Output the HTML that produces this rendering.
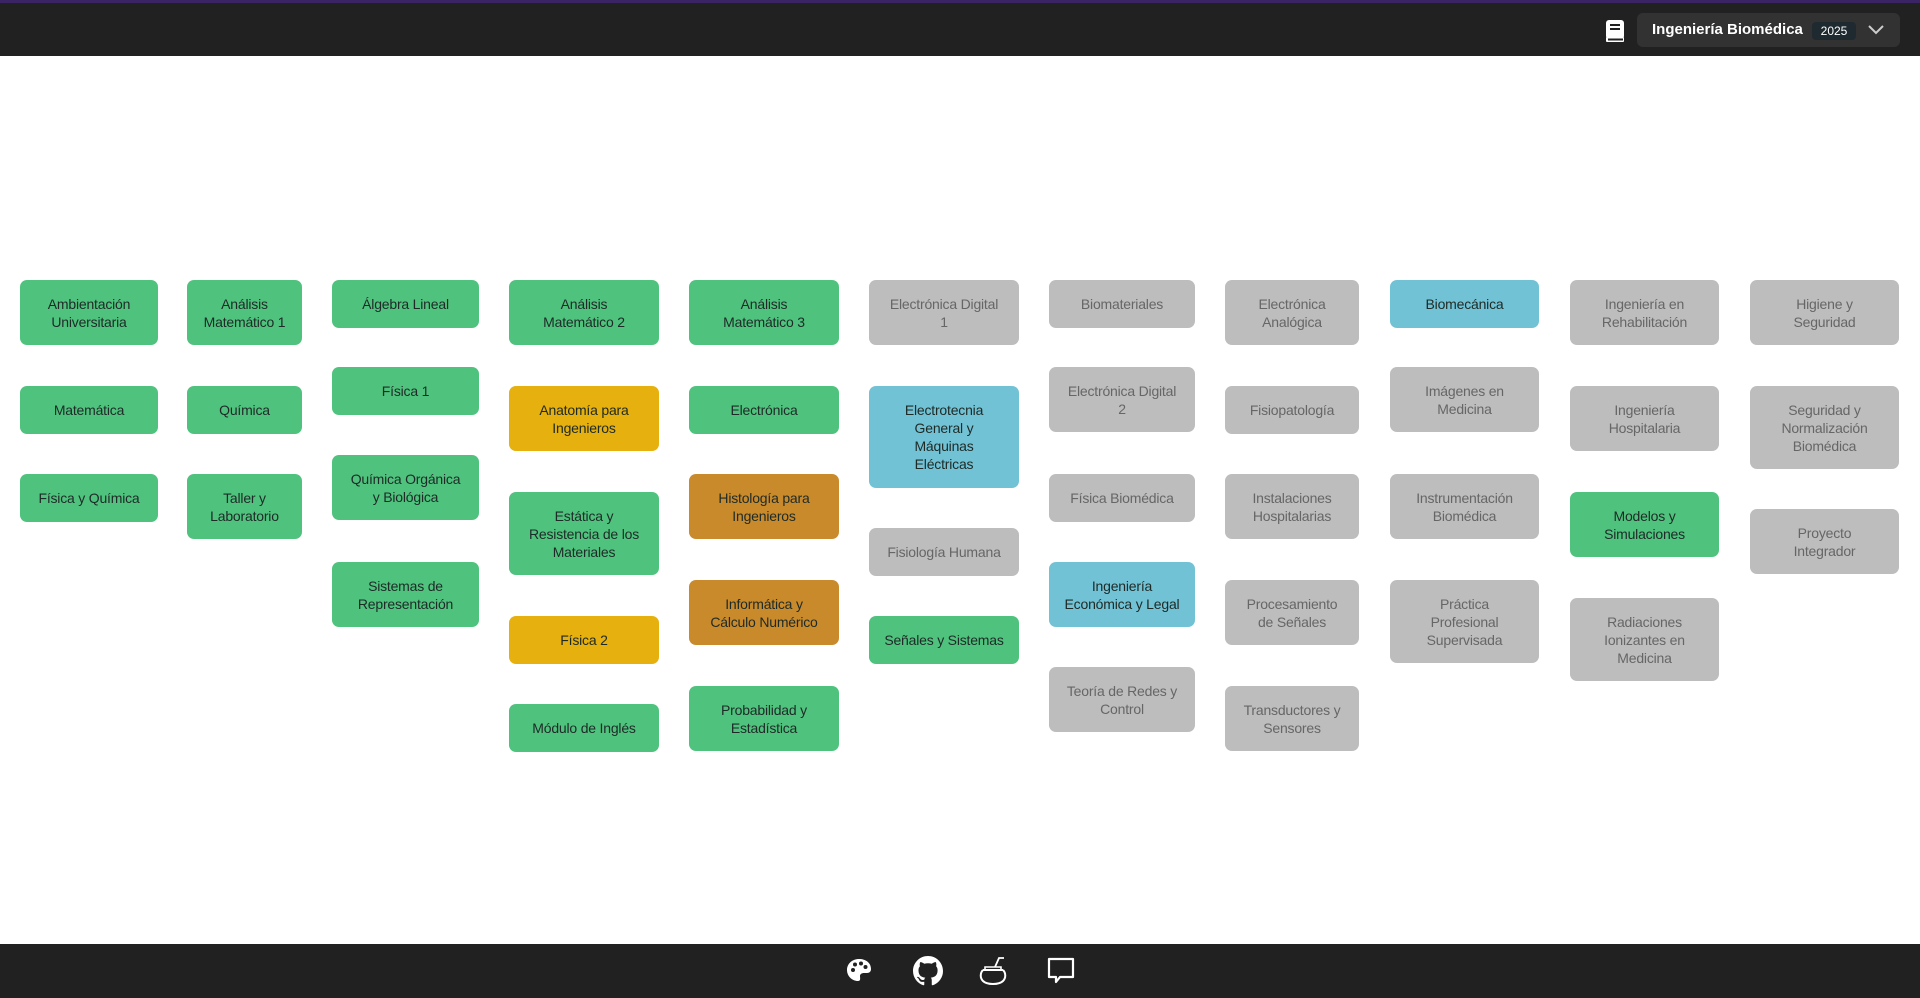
<!DOCTYPE html>
<html><head><meta charset="utf-8"><style>
*{margin:0;padding:0;box-sizing:border-box}
body{width:1920px;height:998px;background:#fff;position:relative;overflow:hidden;font-family:"Liberation Sans",sans-serif}
.hdr{position:absolute;left:0;top:0;width:1920px;height:56px;background:#212121;border-top:3px solid #3b2466}
.ftr{position:absolute;left:0;top:944px;width:1920px;height:54px;background:#212121}
.c{position:absolute;border-radius:7px;display:flex;align-items:center;justify-content:center;text-align:center;font-size:14px;line-height:18px;color:#1e2a26;white-space:nowrap;letter-spacing:-0.2px}
.g{background:#4fc37e}.y{background:#e6b00e}.b{background:#c98a2c}.l{background:#72c2d6}.x{background:#bdbdbd;color:#666}
.sel{position:absolute;left:1637px;top:13px;width:263px;height:34px;background:#323232;border-radius:6px}
</style></head><body>
<div class="hdr"></div>
<svg style="position:absolute;left:1604px;top:19px" width="22" height="24" viewBox="0 0 22 24"><rect x="2" y="1" width="18" height="19" rx="3" fill="#fff"/><rect x="2" y="18" width="18" height="5" rx="1" fill="#fff"/><rect x="4" y="19.5" width="15" height="2" fill="#212121"/><rect x="6" y="5" width="10" height="2" fill="#212121"/><rect x="6" y="9" width="10" height="2" fill="#212121"/></svg>
<div class="sel"></div>
<div style="position:absolute;left:1652px;top:21px;color:#fff;font-weight:bold;font-size:15px">Ingeniería Biomédica</div>
<div style="position:absolute;left:1812px;top:22px;width:44px;height:18px;background:#1e2a30;border-radius:4px;color:#fff;font-size:12px;text-align:center;line-height:18px">2025</div>
<svg style="position:absolute;left:1867px;top:24px" width="18" height="12" viewBox="0 0 18 12"><path d="M2 2l7 7 7-7" stroke="#ccc" stroke-width="2" fill="none"/></svg>

<div class="c g" style="left:20px;top:280px;width:138px;height:65px">Ambientación<br>Universitaria</div>
<div class="c g" style="left:20px;top:386px;width:138px;height:48px">Matemática</div>
<div class="c g" style="left:20px;top:474px;width:138px;height:48px">Física y Química</div>

<div class="c g" style="left:187px;top:280px;width:115px;height:65px">Análisis<br>Matemático 1</div>
<div class="c g" style="left:187px;top:386px;width:115px;height:48px">Química</div>
<div class="c g" style="left:187px;top:474px;width:115px;height:65px">Taller y<br>Laboratorio</div>

<div class="c g" style="left:332px;top:280px;width:147px;height:48px">Álgebra Lineal</div>
<div class="c g" style="left:332px;top:367px;width:147px;height:48px">Física 1</div>
<div class="c g" style="left:332px;top:455px;width:147px;height:65px">Química Orgánica<br>y Biológica</div>
<div class="c g" style="left:332px;top:562px;width:147px;height:65px">Sistemas de<br>Representación</div>

<div class="c g" style="left:509px;top:280px;width:150px;height:65px">Análisis<br>Matemático 2</div>
<div class="c y" style="left:509px;top:386px;width:150px;height:65px">Anatomía para<br>Ingenieros</div>
<div class="c g" style="left:509px;top:492px;width:150px;height:83px">Estática y<br>Resistencia de los<br>Materiales</div>
<div class="c y" style="left:509px;top:616px;width:150px;height:48px">Física 2</div>
<div class="c g" style="left:509px;top:704px;width:150px;height:48px">Módulo de Inglés</div>

<div class="c g" style="left:689px;top:280px;width:150px;height:65px">Análisis<br>Matemático 3</div>
<div class="c g" style="left:689px;top:386px;width:150px;height:48px">Electrónica</div>
<div class="c b" style="left:689px;top:474px;width:150px;height:65px">Histología para<br>Ingenieros</div>
<div class="c b" style="left:689px;top:580px;width:150px;height:65px">Informática y<br>Cálculo Numérico</div>
<div class="c g" style="left:689px;top:686px;width:150px;height:65px">Probabilidad y<br>Estadística</div>

<div class="c x" style="left:869px;top:280px;width:150px;height:65px">Electrónica Digital<br>1</div>
<div class="c l" style="left:869px;top:386px;width:150px;height:102px">Electrotecnia<br>General y<br>Máquinas<br>Eléctricas</div>
<div class="c x" style="left:869px;top:528px;width:150px;height:48px">Fisiología Humana</div>
<div class="c g" style="left:869px;top:616px;width:150px;height:48px">Señales y Sistemas</div>

<div class="c x" style="left:1049px;top:280px;width:146px;height:48px">Biomateriales</div>
<div class="c x" style="left:1049px;top:367px;width:146px;height:65px">Electrónica Digital<br>2</div>
<div class="c x" style="left:1049px;top:474px;width:146px;height:48px">Física Biomédica</div>
<div class="c l" style="left:1049px;top:562px;width:146px;height:65px">Ingeniería<br>Económica y Legal</div>
<div class="c x" style="left:1049px;top:667px;width:146px;height:65px">Teoría de Redes y<br>Control</div>

<div class="c x" style="left:1225px;top:280px;width:134px;height:65px">Electrónica<br>Analógica</div>
<div class="c x" style="left:1225px;top:386px;width:134px;height:48px">Fisiopatología</div>
<div class="c x" style="left:1225px;top:474px;width:134px;height:65px">Instalaciones<br>Hospitalarias</div>
<div class="c x" style="left:1225px;top:580px;width:134px;height:65px">Procesamiento<br>de Señales</div>
<div class="c x" style="left:1225px;top:686px;width:134px;height:65px">Transductores y<br>Sensores</div>

<div class="c l" style="left:1390px;top:280px;width:149px;height:48px">Biomecánica</div>
<div class="c x" style="left:1390px;top:367px;width:149px;height:65px">Imágenes en<br>Medicina</div>
<div class="c x" style="left:1390px;top:474px;width:149px;height:65px">Instrumentación<br>Biomédica</div>
<div class="c x" style="left:1390px;top:580px;width:149px;height:83px">Práctica<br>Profesional<br>Supervisada</div>

<div class="c x" style="left:1570px;top:280px;width:149px;height:65px">Ingeniería en<br>Rehabilitación</div>
<div class="c x" style="left:1570px;top:386px;width:149px;height:65px">Ingeniería<br>Hospitalaria</div>
<div class="c g" style="left:1570px;top:492px;width:149px;height:65px">Modelos y<br>Simulaciones</div>
<div class="c x" style="left:1570px;top:598px;width:149px;height:83px">Radiaciones<br>Ionizantes en<br>Medicina</div>

<div class="c x" style="left:1750px;top:280px;width:149px;height:65px">Higiene y<br>Seguridad</div>
<div class="c x" style="left:1750px;top:386px;width:149px;height:83px">Seguridad y<br>Normalización<br>Biomédica</div>
<div class="c x" style="left:1750px;top:509px;width:149px;height:65px">Proyecto<br>Integrador</div>

<div class="ftr"></div>
<svg style="position:absolute;left:844px;top:956px" width="30" height="30" viewBox="0 0 30 30"><path d="M15 3C8 3 3 8 3 14c0 6 5 11 11 11 3 0 2-3 2-5s2-3 4-3h3c3 0 4-2 4-4C27 7 22 3 15 3z" fill="#fff"/><circle cx="9" cy="14" r="2" fill="#212121"/><circle cx="11" cy="8.5" r="2" fill="#212121"/><circle cx="17" cy="7.5" r="2" fill="#212121"/><circle cx="21.5" cy="11" r="2" fill="#212121"/></svg>
<svg style="position:absolute;left:913px;top:956px" width="30" height="30" viewBox="0 0 16 16"><path fill="#fff" d="M8 0C3.58 0 0 3.58 0 8c0 3.54 2.29 6.53 5.47 7.59.4.07.55-.17.55-.38 0-.19-.01-.82-.01-1.49-2.01.37-2.53-.49-2.69-.94-.09-.23-.48-.94-.82-1.13-.28-.15-.68-.52-.01-.53.63-.01 1.08.58 1.23.82.72 1.21 1.87.87 2.33.66.07-.52.28-.87.51-1.07-1.78-.2-3.64-.89-3.64-3.95 0-.87.31-1.59.82-2.15-.08-.2-.36-1.02.08-2.12 0 0 .67-.21 2.2.82.64-.18 1.32-.27 2-.27.68 0 1.36.09 2 .27 1.53-1.04 2.2-.82 2.2-.82.44 1.1.16 1.92.08 2.12.51.56.82 1.27.82 2.15 0 3.07-1.87 3.75-3.65 3.95.29.25.54.73.54 1.48 0 1.07-.01 1.93-.01 2.2 0 .21.15.46.55.38A8.013 8.013 0 0016 8c0-4.42-3.58-8-8-8z"/></svg>
<svg style="position:absolute;left:976px;top:954px" width="34" height="34" viewBox="0 0 34 34"><path d="M7 16c-3 3-3 8 0 11 2 2 5 3 10 3s8-1 10-3c3-3 3-8 0-11" stroke="#fff" stroke-width="2" fill="none"/><path d="M7 16h20" stroke="#fff" stroke-width="2"/><path d="M9 13h16v3H9z" stroke="#fff" stroke-width="1.6" fill="none"/><path d="M19 13l4-9h5" stroke="#fff" stroke-width="1.8" fill="none"/></svg>
<svg style="position:absolute;left:1046px;top:956px" width="30" height="30" viewBox="0 0 30 30"><path d="M3 3h24v18H14l-4 5v-5H3z" stroke="#fff" stroke-width="2.2" fill="none" stroke-linejoin="round"/></svg>
</body></html>
